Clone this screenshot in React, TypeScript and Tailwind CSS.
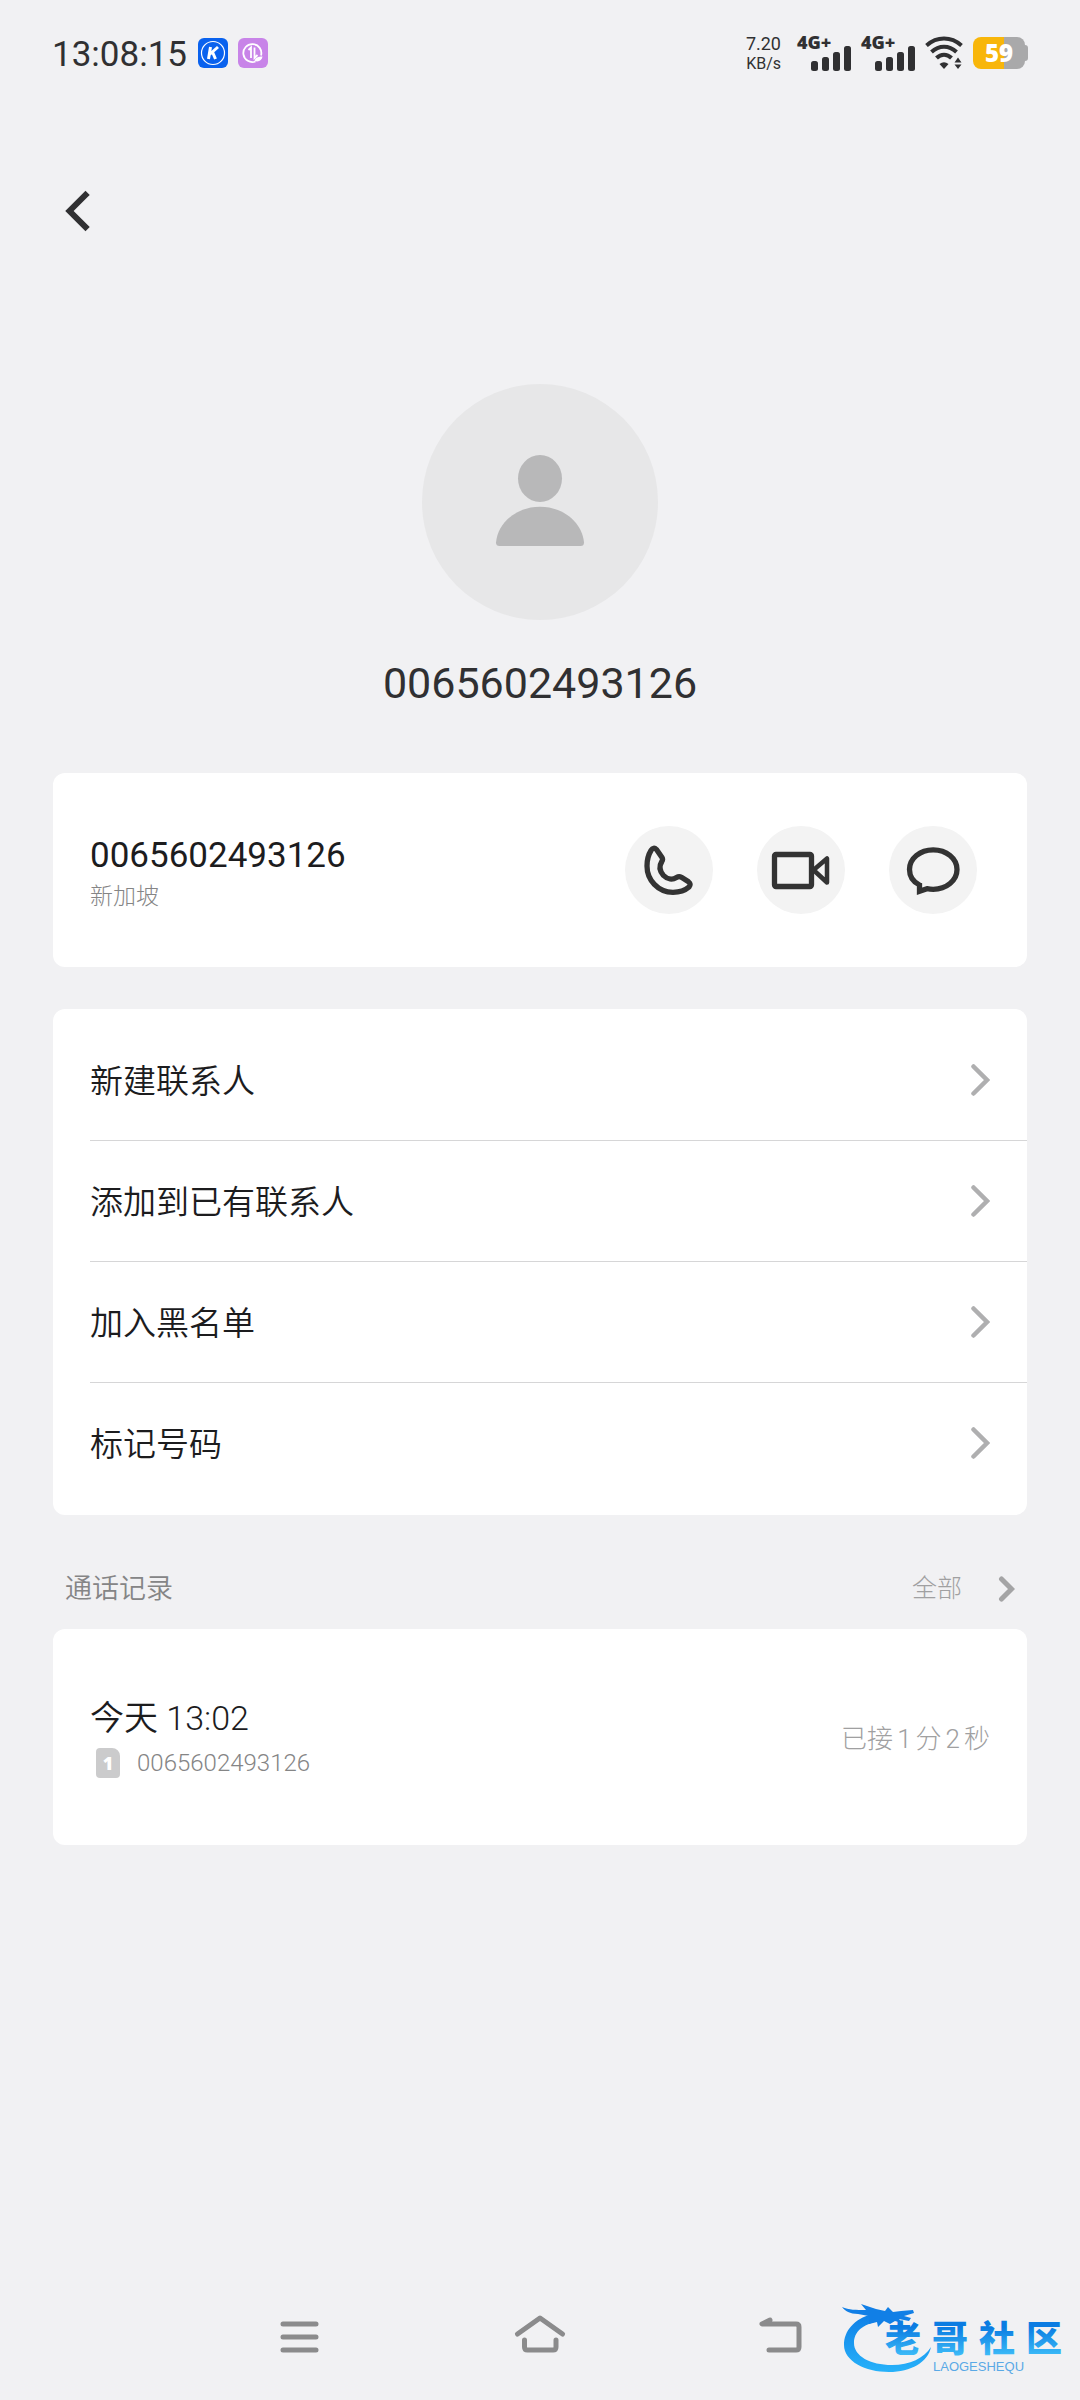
import type { ReactNode } from "react";

const PHONE_NUMBER = "0065602493126";

const menuItems = ["新建联系人", "添加到已有联系人", "加入黑名单", "标记号码"];

function SignalIcon() {
  return (
    <svg width="54" height="48" viewBox="0 -4 54 48" fill="#303032" className="overflow-visible" role="img" aria-label="4G+">
      <text x="0" y="16" fontSize="18" fontWeight="800" fontFamily="'Open Sans', sans-serif">
        4G+
      </text>
      <rect x="14" y="28" width="7" height="10" rx="2.5" />
      <rect x="25" y="24" width="7" height="14" rx="2.5" />
      <rect x="36" y="19" width="7" height="19" rx="2.5" />
      <rect x="47" y="13" width="7" height="25" rx="2.5" />
    </svg>
  );
}

function WifiIcon() {
  return (
    <svg width="38" height="34" viewBox="0 0 38 34" fill="none" stroke="#303032" strokeWidth="4">
      <path d="M1.5 9.5C12 .2 26 .2 36.5 9.5" />
      <path d="M6.5 16C14 9 24 9 31.5 16" />
      <path d="M11.5 22C16 17.5 22 17.5 26.5 22" />
      <path d="M14.5 28Q19 24.5 23.5 28L19 33Z" fill="#303032" stroke="none" />
      <path d="M29.5 26.5L33 21.5L36.5 26.5ZM29.5 28.5L33 33L36.5 28.5Z" fill="#303032" stroke="none" />
    </svg>
  );
}

function StatusBar() {
  return (
    <header className="flex h-[106px] items-center justify-between px-[52px]">
      <div className="flex items-center gap-[10px]">
        <time className="w-[136px] pt-1 text-[35px] leading-10 font-normal text-[#303032]">13:08:15</time>
        <svg width="30" height="30" viewBox="0 0 30 30" fill="none" aria-hidden="true">
          <rect width="30" height="30" rx="6" fill="#0a62ee" />
          <circle cx="15" cy="15" r="11.5" stroke="#fff" strokeWidth="1.2" />
          <path d="M12.5 9L10.5 21M20 9L11.5 16.5M14.5 14L17.5 21" stroke="#fff" strokeWidth="3" />
        </svg>
        <svg width="30" height="30" viewBox="0 0 30 30" fill="none" aria-hidden="true">
          <rect width="30" height="30" rx="6" fill="#c884e8" />
          <path d="M23 17.5A9 9 0 1 0 17.5 23.5" stroke="#fff" strokeWidth="1.8" />
          <path d="M10.5 12L13 9.5V20M16.5 9.5V20L19.5 17" stroke="#fff" strokeWidth="1.8" />
          <path d="M16.5 23C17 19.5 20.5 18.5 24.5 18.5C24 22 21 24.5 16.5 23Z" fill="#fff" />
        </svg>
      </div>
      <div className="flex items-center gap-[10px]">
        <div className="mr-1.5 pt-0.5 text-right font-normal text-[#303032]">
          <p className="text-lg leading-5">7.20</p>
          <p className="text-base leading-5">KB/s</p>
        </div>
        <SignalIcon />
        <SignalIcon />
        <WifiIcon />
        <div className="flex items-center">
          <div className="flex h-8 w-[52px] items-center justify-center rounded-lg bg-linear-to-r from-[#f8b60a] from-60% to-[#a9a9aa] to-60% font-['Open_Sans',sans-serif] text-2xl font-extrabold text-white">
            59
          </div>
          <div className="h-4 w-[3px] rounded-r bg-[#a9a9aa]" />
        </div>
      </div>
    </header>
  );
}

function ChevronRight({ bold = false }: { bold?: boolean }) {
  return bold ? (
    <svg width="17" height="26" viewBox="0 0 17 26" fill="none" stroke="#a4a4a5" strokeWidth="5" strokeLinecap="round" aria-hidden="true">
      <path d="M3.5 3L13.5 13L3.5 23" />
    </svg>
  ) : (
    <svg width="19" height="32" viewBox="0 0 19 32" fill="none" stroke="#afafb0" strokeWidth="4.5" strokeLinecap="round" aria-hidden="true">
      <path d="M2.5 2.5L16 16L2.5 29.500" />
    </svg>
  );
}

function ActionButton({ label, children }: { label: string; children: ReactNode }) {
  return (
    <button type="button" aria-label={label} className="size-[88px] rounded-full bg-[#f3f3f3]">
      <svg viewBox="0 0 88 88" fill="none" stroke="#333333" strokeWidth="5.3">
        {children}
      </svg>
    </button>
  );
}

function NavButton({ label, children }: { label: string; children: ReactNode }) {
  return (
    <button type="button" aria-label={label} className="flex w-60 justify-center">
      <svg width="52" height="42" viewBox="0 0 52 42" fill="none" stroke="#8b8b8c" strokeWidth="5" strokeLinecap="round" strokeLinejoin="round">
        {children}
      </svg>
    </button>
  );
}

function CommunityLogo() {
  return (
    <svg width="224" height="76" viewBox="0 0 224 76" fill="none" role="img" aria-label="老哥社区">
      <defs>
        <linearGradient id="logo-ring" x1="0" y1="0" x2="0" y2="1">
          <stop offset="0" stopColor="#0f7fe6" />
          <stop offset="1" stopColor="#27b2fa" />
        </linearGradient>
        <linearGradient id="logo-text" x1="0" y1="0" x2="0" y2="1">
          <stop offset="0.2" stopColor="#0b7ce2" />
          <stop offset="0.9" stopColor="#3dbcf8" />
        </linearGradient>
      </defs>
      <path
        d="M30 12C12 17 2 29 2 43C2 59 23 70 47 70C69 70 86 60 89 45C82 56 68 63 50 63C28 63 12 54 12 41C12 30 20 22 38 19Z"
        fill="url(#logo-ring)"
      />
      {/* dragon head, whisker on the left and jaw on the right */}
      <path
        d="M0 5C7 8 14 8 24 8L19 2L34 7L43 9L46 5L51 10L59 9L71 8L72 11L62 14L69 16L67 19L57 17L60 21L53 19L48 22L42 19L36 25L35 20L27 22L27 14L16 12C8 12 3 9 0 5Z"
        fill="#117fe6"
      />
      <g fill="url(#logo-text)" fontFamily="'Liberation Sans', 'Noto Sans CJK SC', sans-serif" fontSize="36" fontWeight="900">
        <text x="43" y="50">老</text>
        <text x="90" y="50">哥</text>
        <text x="137" y="50">社</text>
        <text x="184" y="50">区</text>
      </g>
      <text x="91" y="69" fill="#5aa9e6" fontFamily="'Liberation Sans', sans-serif" fontSize="13">
        LAOGESHEQU
      </text>
    </svg>
  );
}

export default function App() {
  return (
    <div className="relative flex min-h-screen flex-col bg-[#f1f1f3] font-[Roboto,'Noto_Sans_CJK_SC',sans-serif] font-[350] text-[#1c1c1e]">
      <StatusBar />

      <main className="px-[53px]">
        <button type="button" aria-label="返回" className="mt-[72px] block p-3">
          <svg width="26" height="42" viewBox="0 0 26 42" fill="none" stroke="#303032" strokeWidth="6" strokeLinecap="square">
            <path d="M20.5 5L4.5 21L20.5 37" />
          </svg>
        </button>

        <section className="mt-[140px] flex flex-col items-center">
          <svg width="236" height="236" viewBox="0 0 236 236" fill="#b8b8b9" aria-hidden="true">
            <circle cx="118" cy="118" r="118" fill="#e7e7e8" />
            <ellipse cx="118" cy="94.5" rx="22" ry="23.5" />
            <path d="M74 158.5C76 138 95 122.7 118 122.7S160 138 162 158.5Q162 162 158.5 162H77.5Q74 162 74 158.5Z" />
          </svg>
          <h1 className="mt-8 text-[43px] leading-[62px] font-normal text-[#303032]">{PHONE_NUMBER}</h1>
        </section>

        <section className="mt-[59px] flex h-[194px] items-center justify-between rounded-xl bg-white pr-[50px] pl-[37px]">
          <div className="pt-2">
            <p className="text-[35px] leading-[46px] font-normal">{PHONE_NUMBER}</p>
            <p className="text-[23px] leading-9 font-light text-[#858586]">新加坡</p>
          </div>
          <div className="flex gap-11">
            <ActionButton label="拨打电话">
              <path d="M31.5 23.5L37 31.5Q38.2 33.4 36.8 35.5C34 40 34.5 45 38.5 49.5C42.5 53.5 47.5 54 51.5 51.5Q54 50 56.5 51.3L63.5 55.8Q66.5 58 64 61C60 64.5 54 66.3 48 66.3C33 66.3 22 54 22 40C22 34 23.5 28.5 26 24.5Q28.5 20.5 31.5 23.5Z" />
            </ActionButton>
            <ActionButton label="视频通话">
              <rect x="17.5" y="28.5" width="37" height="32" rx="1.5" />
              <path d="M56.5 44L70 32.5V56.5Z" strokeWidth="4.5" strokeLinejoin="round" />
            </ActionButton>
            <ActionButton label="发送信息">
              <path d="M30.5 59C23.5 55.5 20.5 50 20.5 43.5C20.5 32.5 31 23.8 44.2 23.8S68 32.5 68 43.5S57.4 63.3 44.2 63.3Q41 63.3 38 62.7L30.5 65.3Z" />
            </ActionButton>
          </div>
        </section>

        <ul className="mt-[42px] rounded-xl bg-white pt-[11px] pb-3 pl-[37px]">
          {menuItems.map((item) => (
            <li key={item} className="border-b border-[#d6d6d7] last:border-0">
              <button type="button" className="flex h-[120px] w-full items-center justify-between pr-[37px] text-[33px]">
                <span className="pt-1">{item}</span>
                <ChevronRight />
              </button>
            </li>
          ))}
        </ul>

        <section>
          <div className="flex h-[114px] items-end justify-between px-3 pb-5">
            <h2 className="text-[27px] leading-10 text-[#858586]">通话记录</h2>
            <button type="button" className="flex items-center gap-9 text-[25px] leading-10 font-light text-[#a0a0a1]">
              全部
              <ChevronRight bold />
            </button>
          </div>
          <div className="flex h-[216px] items-center justify-between rounded-xl bg-white px-[37px]">
            <div className="pt-1">
              <p className="text-[34px] leading-[48px]">今天 13:02</p>
              <div className="flex items-center gap-[17px] pl-1.5">
                <span className="flex h-[30px] w-6 items-center justify-center rounded-sm rounded-tr-lg bg-[#cbcbcc] font-['Open_Sans',sans-serif] text-lg font-extrabold text-white">
                  1
                </span>
                <span className="text-2xl leading-[42px] font-light text-[#858586]">{PHONE_NUMBER}</span>
              </div>
            </div>
            <p className="pt-1 text-[26px] font-light text-[#a0a0a1]">
              已接<span className="mx-1">1</span>分<span className="mx-1">2</span>秒
            </p>
          </div>
        </section>
      </main>

      <nav className="mt-auto flex justify-center pb-[43px]">
        <NavButton label="最近任务">
          <path d="M9 9H42M9 22H42M9 35H42" />
        </NavButton>
        <NavButton label="主页">
          <path d="M3.5 19L26 3L48.5 19M10.5 25V32Q10.5 35 13.5 35H39Q42 35 42 32V25" />
        </NavButton>
        <NavButton label="返回">
          <path d="M16 5L8 9H42Q45 9 45 12V32Q45 35 42 35H15" />
        </NavButton>
      </nav>

      <div className="absolute right-[14px] bottom-[22px]">
        <CommunityLogo />
      </div>
    </div>
  );
}
